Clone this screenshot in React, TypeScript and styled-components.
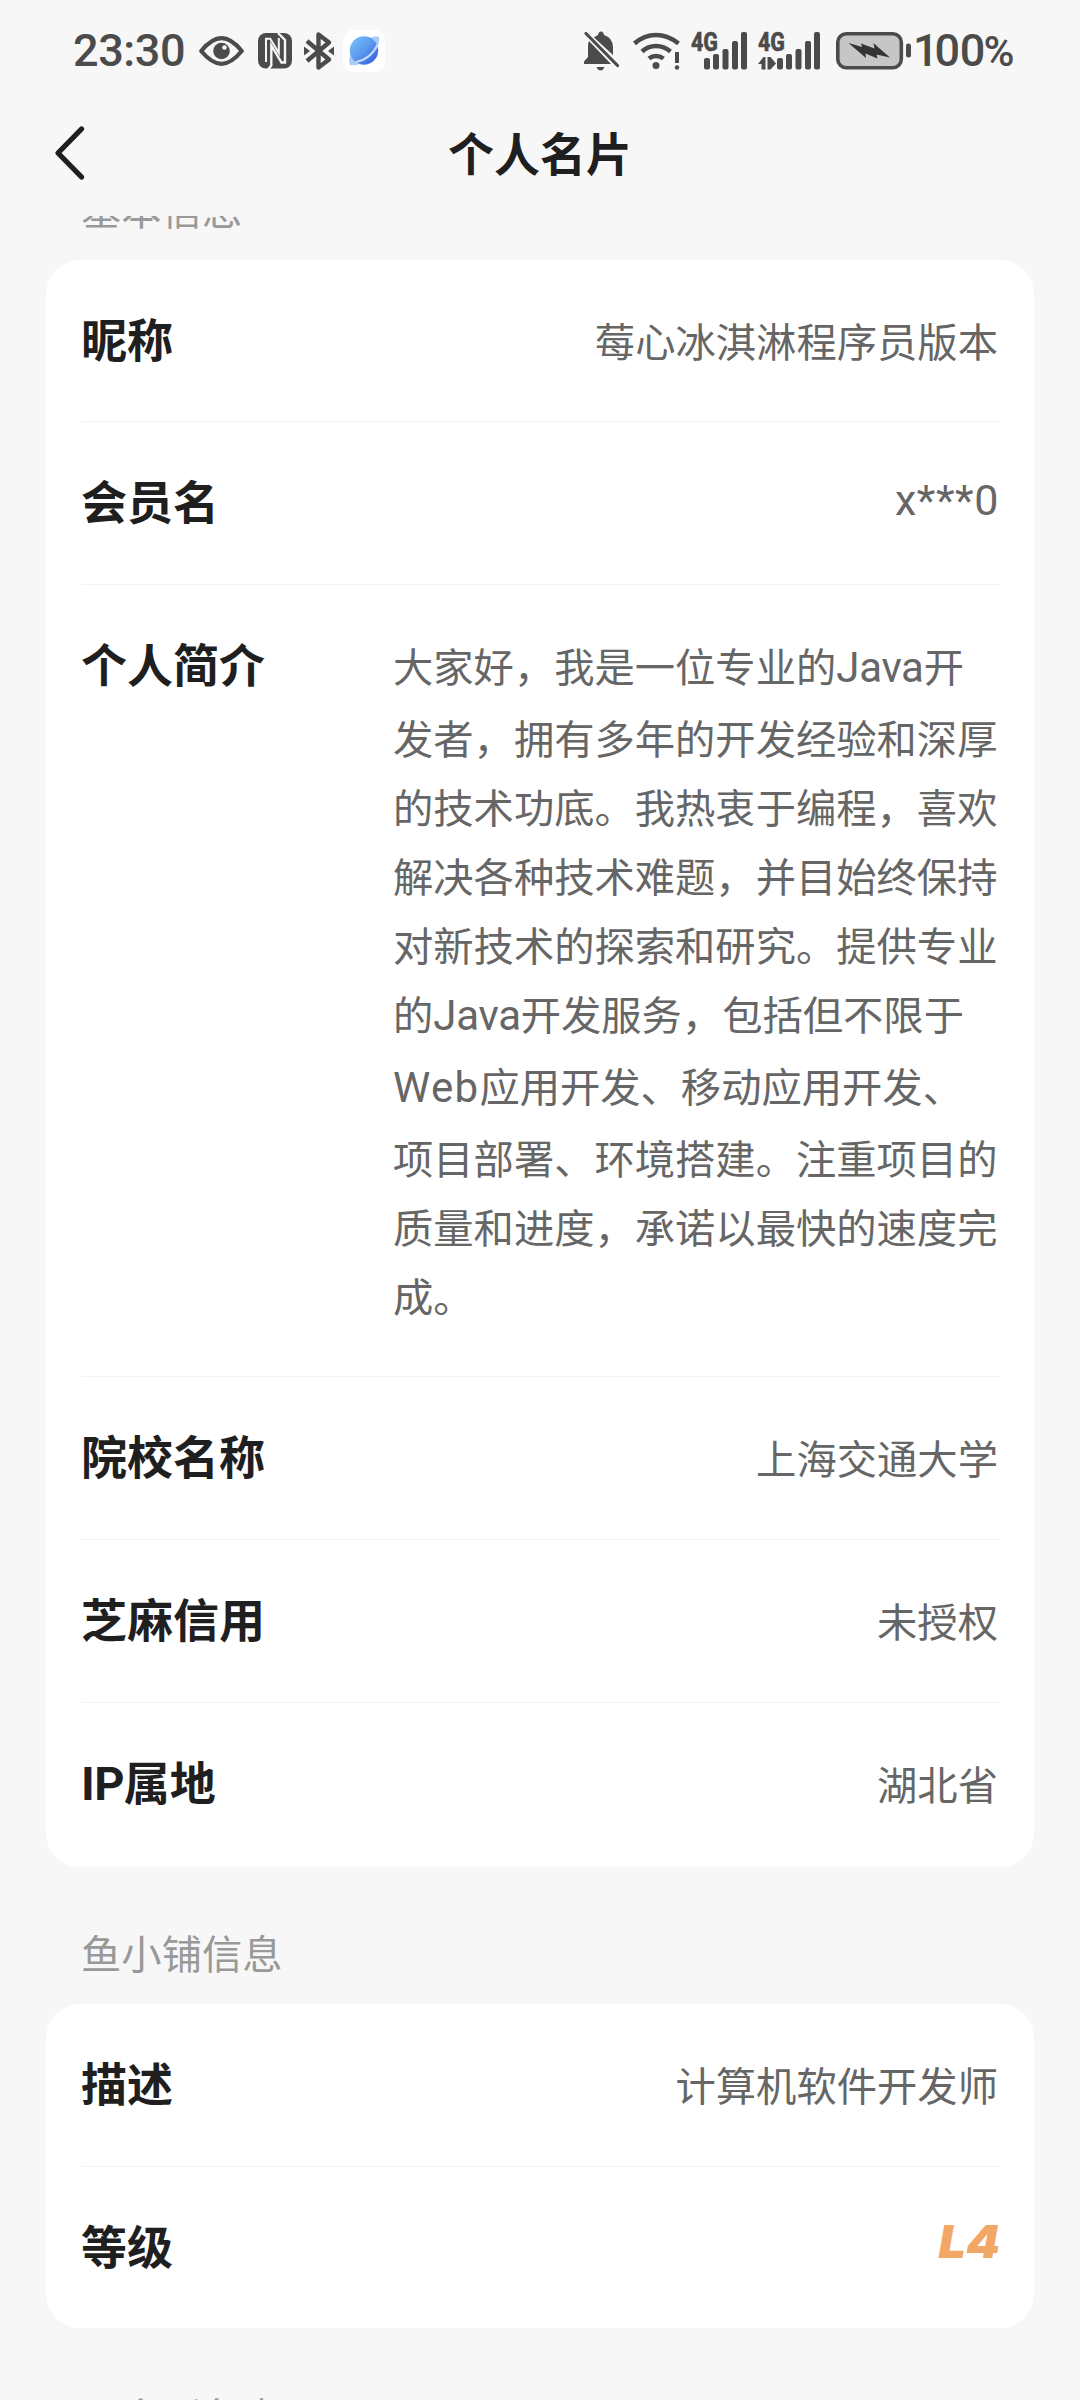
import React from "react";
import styled, { createGlobalStyle } from "styled-components";

const cjk = `"Noto Sans CJK SC", sans-serif`;

const GlobalStyle = createGlobalStyle`
  * { box-sizing: border-box; }
  body { margin: 0; background: #f7f7f7; }
`;

const Screen = styled.main`
  width: 1080px;
  height: 2400px;
  overflow: hidden;
  display: flex;
  flex-direction: column;
  background: #f7f7f7;
  font-family: ${cjk};
  color: #1f1f1f;
`;

const StatusBar = styled.header`
  flex: none;
  height: 100px;
  padding: 2px 69px 0 73px;
  display: flex;
  align-items: center;
  justify-content: space-between;
  color: #4b4b4b;
`;

const StatusGroup = styled.div`
  display: flex;
  align-items: center;
`;

const StatusText = styled.span<{ $width: number; $indent?: number }>`
  width: ${(p) => p.$width}px;
  padding-left: ${(p) => p.$indent ?? 0}px;
  font: 500 45px/52px Roboto, sans-serif;
  letter-spacing: -0.4px;
  white-space: nowrap;
`;

const NarrowOne = styled.span`
  letter-spacing: -4px;
`;

const Percent = styled.span`
  margin-left: -1.5px;
  font-size: 42px;
`;

const Glyph = styled.svg<{ $left?: number }>`
  display: block;
  flex: none;
  margin-left: ${(p) => p.$left ?? 0}px;
  overflow: visible;
`;

const NavBar = styled.nav`
  flex: none;
  height: 116px;
  padding: 0 54px;
  display: grid;
  grid-template-columns: 60px 1fr 60px;
  align-items: center;
`;

const BackButton = styled.button`
  border: 0;
  padding: 0;
  background: none;
  height: 106px;
  color: #1f1f1f;
  align-self: start;
`;

const Title = styled.h1`
  margin: 0;
  height: 102px;
  align-self: start;
  text-align: center;
  font-size: 46px;
  font-weight: 700;
  line-height: 102px;
`;

const ScrollArea = styled.div`
  flex: 1;
  min-height: 0;
  overflow: hidden;
  padding: 0 46px;
`;

const SectionTitle = styled.h2<{ $shift?: number }>`
  margin: ${(p) => p.$shift ?? 0}px 0 0;
  height: 137px;
  padding: 55px 0 0 35px;
  font-size: 40.32px;
  font-weight: 400;
  line-height: 60px;
  color: #999;
`;

const Card = styled.section`
  background: #fff;
  border-radius: 34px;
  padding: 0 34px 0 35px;
`;

const Row = styled.div<{ $height: number }>`
  height: ${(p) => p.$height}px;
  padding-top: 43px;
  display: flex;
  justify-content: space-between;
  border-bottom: 1px solid #f3f3f3;
  &:last-child { border-bottom: 0; }
`;

const Label = styled.span`
  font-size: 46px;
  font-weight: 700;
  line-height: 69px;
`;

const LabelLatin = styled.span`
  font-family: Roboto, sans-serif;
  font-size: 47px;
  line-height: 1;
  letter-spacing: -0.6px;
`;

const Value = styled.span`
  margin-right: 2px;
  padding-top: 2px;
  font-size: 40.32px;
  line-height: 69px;
  color: #666;
  white-space: nowrap;
`;

const LatinValue = styled(Value)`
  margin-right: 1px;
  padding-top: 1px;
  font-family: Roboto, sans-serif;
  font-size: 43px;
  letter-spacing: 0.6px;
`;

const Bio = styled.div`
  width: 607px;
  margin-top: 2px;
  color: #666;
  font-size: 40.3px;
`;

const BioLine = styled.div<{ $height: number }>`
  height: ${(p) => p.$height}px;
  line-height: 69px;
  white-space: nowrap;
`;

const Latin = styled.span<{ $track?: number }>`
  font-family: Roboto, sans-serif;
  font-size: 42px;
  line-height: 1;
  letter-spacing: ${(p) => p.$track ?? 0}px;
`;

const Level = styled.span`
  margin-right: 0;
  font: italic 900 45px/63px Inter, sans-serif;
  color: #f2a766;
  transform: scaleX(1.08);
  transform-origin: right center;
`;

const Eye = () => (
  <Glyph width="45" height="30" viewBox="0 0 45 30" $left={15}>
    <path d="M2.2 15C10 5.5 16 2.2 22.5 2.2S35 5.500 42.800 15C35 24.500 29 27.800 22.500 27.800S10 24.500 2.200 15Z" fill="none" stroke="currentColor" strokeWidth="4.200" strokeLinejoin="round" />
    <circle cx="22.500" cy="15" r="8.300" fill="currentColor" />
    <circle cx="25.500" cy="11.500" r="2.300" fill="#f7f7f7" />
  </Glyph>
);

const Nfc = () => (
  <Glyph width="34" height="36" viewBox="0 0 34 36" $left={14}>
    <rect width="34" height="35.500" rx="8" fill="currentColor" />
    <path d="M13.300 33V12.500L23.500 29.500H27V7L20 0M13.300 32.500L10 36.500" fill="none" stroke="#f7f7f7" strokeWidth="2.400" />
    <path d="M8 29V5.800H12.200L20.800 20V5" fill="none" stroke="#f7f7f7" strokeWidth="2" />
  </Glyph>
);

const Bluetooth = () => (
  <Glyph width="30" height="38" viewBox="0 0 30 38" $left={12}>
    <path d="M3 9L25 27.500L14.500 35.500V2.500L25 10.500L3 29" fill="none" stroke="currentColor" strokeWidth="4.400" strokeLinejoin="round" />
    <path d="M0 14.500L6 19L0 23.500ZM30 14.500L24 19L30 23.500Z" fill="currentColor" />
  </Glyph>
);

const Browser = () => (
  <Glyph width="42" height="42" viewBox="0 0 42 42" $left={9}>
    <defs>
      <linearGradient id="planet" x1="0" y1="0" x2="1" y2="1">
        <stop offset="0" stopColor="#7cc4f8" />
        <stop offset=".5" stopColor="#5b98ee" />
        <stop offset="1" stopColor="#2f55d8" />
      </linearGradient>
    </defs>
    <rect width="42" height="42" rx="10" fill="#fff" />
    <path d="M7 35Q5 30 8 24L17 34Q11 36 7 35ZM27 8Q33 5 36 7Q37 12 34 17Z" fill="#a9cdf8" />
    <circle cx="21" cy="20.500" r="14.200" fill="url(#planet)" />
    <path d="M13 32Q28 29 35 14" fill="none" stroke="#c5dcfb" strokeWidth="2" />
  </Glyph>
);

const BellOff = () => (
  <Glyph width="36" height="40" viewBox="0 0 36 40">
    <path d="M10 6.500Q12 4.500 14 4Q14.500 .5 17 .5T20 4Q28.500 6.500 29 16V24ZM5 10L27 33H0V30.500L4 26V16Q4 12 5 10Z" fill="currentColor" />
    <path d="M12.500 36H20.500Q19 39.500 16.500 39.500T12.500 36Z" fill="currentColor" />
    <path d="M2 2.500L33.500 34.500" stroke="currentColor" strokeWidth="3.200" strokeLinecap="round" />
  </Glyph>
);

const Wifi = () => (
  <Glyph width="48" height="38" viewBox="0 0 48 38" $left={13}>
    <g fill="none" stroke="currentColor" strokeWidth="4.600">
      <path d="M1.500 11.500Q11 3 23 3T45.500 11.500" />
      <path d="M9 19.500Q15 14 23 14T37.500 19.500" />
      <path d="M16 26.500Q19 24 23 24T30.500 26.500" />
      <path d="M44 20V31" strokeWidth="4" />
    </g>
    <circle cx="23" cy="33.500" r="3.500" fill="currentColor" />
    <circle cx="44" cy="35.500" r="2.200" fill="currentColor" />
  </Glyph>
);

const bars = [
  [13, 26],
  [22, 22],
  [31.5, 17],
  [41, 9],
  [50, 0],
];

const Signal = ({ arrows, left, shift = 0 }: { arrows?: boolean; left: number; shift?: number }) => (
  <Glyph width={56 + shift} height="38" viewBox={`0 0 ${56 + shift} 38`} $left={left}>
    <text x="0" y="18.500" fontFamily="Roboto, sans-serif" fontWeight="800" fontSize="25" textLength="27" lengthAdjust="spacingAndGlyphs" fill="currentColor" stroke="currentColor" strokeWidth=".5">
      4G
    </text>
    {bars.map(([x, y]) => (
      <rect key={x} x={x + shift} y={y} width="6" height={37.5 - y} rx="2" fill="currentColor" />
    ))}
    {arrows && <path d="M0 32L5.500 25H7.500V37.500H3.500V32ZM9.500 25H12.500L18 31.500L12.500 37.500H9.500Z" fill="currentColor" />}
  </Glyph>
);

const Battery = () => (
  <Glyph width="76" height="38" viewBox="0 0 76 38" $left={16}>
    <rect x="1.800" y="1.800" width="63.500" height="34" rx="8.500" fill="#c6c6c6" stroke="currentColor" strokeWidth="3.600" />
    <path d="M12.500 11L26 15L25 11.500L38.500 16.500L37.500 11L43 16L54 25.500L40.500 22.500L41.500 26.500L29.500 21.500L30 26Z" fill="#333" />
    <rect x="70" y="11.500" width="5" height="14" rx="2.300" fill="currentColor" />
  </Glyph>
);

const bio: { height: number; parts: (string | { latin: string; track: number })[] }[] = [
  { height: 72, parts: ["大家好，我是一位专业的", { latin: "Java", track: -0.3 }, "开"] },
  { height: 69, parts: ["发者，拥有多年的开发经验和深厚"] },
  { height: 69, parts: ["的技术功底。我热衷于编程，喜欢"] },
  { height: 69, parts: ["解决各种技术难题，并目始终保持"] },
  { height: 69, parts: ["对新技术的探索和研究。提供专业"] },
  { height: 72, parts: ["的", { latin: "Java", track: -0.3 }, "开发服务，包括但不限于"] },
  { height: 72, parts: [{ latin: "Web", track: 1.3 }, "应用开发、移动应用开发、"] },
  { height: 69, parts: ["项目部署、环境搭建。注重项目的"] },
  { height: 69, parts: ["质量和进度，承诺以最快的速度完"] },
  { height: 69, parts: ["成。"] },
];

const Field = ({ label, value, height }: { label: React.ReactNode; value: string; height: number }) => (
  <Row $height={height}>
    <Label>{label}</Label>
    <Value>{value}</Value>
  </Row>
);

export default function App() {
  return (
    <Screen>
      <GlobalStyle />
      <StatusBar>
        <StatusGroup>
          <StatusText $width={111}>23:30</StatusText>
          <Eye />
          <Nfc />
          <Bluetooth />
          <Browser />
        </StatusGroup>
        <StatusGroup>
          <BellOff />
          <Wifi />
          <Signal left={10} />
          <Signal left={11} shift={6} arrows />
          <Battery />
          <StatusText $width={99} $indent={1}>
            <NarrowOne>1</NarrowOne>00<Percent>%</Percent>
          </StatusText>
        </StatusGroup>
      </StatusBar>
      <NavBar>
        <BackButton aria-label="返回">
          <Glyph width="32" height="54" viewBox="0 0 32 54" $left={-0.5}>
            <path d="M27.500 3L4 27L27.500 51" fill="none" stroke="currentColor" strokeWidth="5.300" strokeLinecap="round" strokeLinejoin="round" />
          </Glyph>
        </BackButton>
        <Title>个人名片</Title>
      </NavBar>
      <ScrollArea>
        <SectionTitle $shift={-93}>基本信息</SectionTitle>
        <Card>
          <Field label="昵称" value="莓心冰淇淋程序员版本" height={162} />
          <Row $height={163}>
            <Label>会员名</Label>
            <LatinValue>x***0</LatinValue>
          </Row>
          <Row $height={792}>
            <Label>个人简介</Label>
            <Bio>
              {bio.map((line, i) => (
                <BioLine key={i} $height={line.height}>
                  {line.parts.map((part, j) =>
                    typeof part === "string" ? part : <Latin key={j} $track={part.track}>{part.latin}</Latin>
                  )}
                </BioLine>
              ))}
            </Bio>
          </Row>
          <Field label="院校名称" value="上海交通大学" height={163} />
          <Field label="芝麻信用" value="未授权" height={163} />
          <Field label={<><LabelLatin>IP</LabelLatin>属地</>} value="湖北省" height={164} />
        </Card>
        <SectionTitle>鱼小铺信息</SectionTitle>
        <Card>
          <Field label="描述" value="计算机软件开发师" height={163} />
          <Row $height={161}>
            <Label>等级</Label>
            <Level>L4</Level>
          </Row>
        </Card>
        <SectionTitle $shift={2}>更多形象卡</SectionTitle>
      </ScrollArea>
    </Screen>
  );
}
